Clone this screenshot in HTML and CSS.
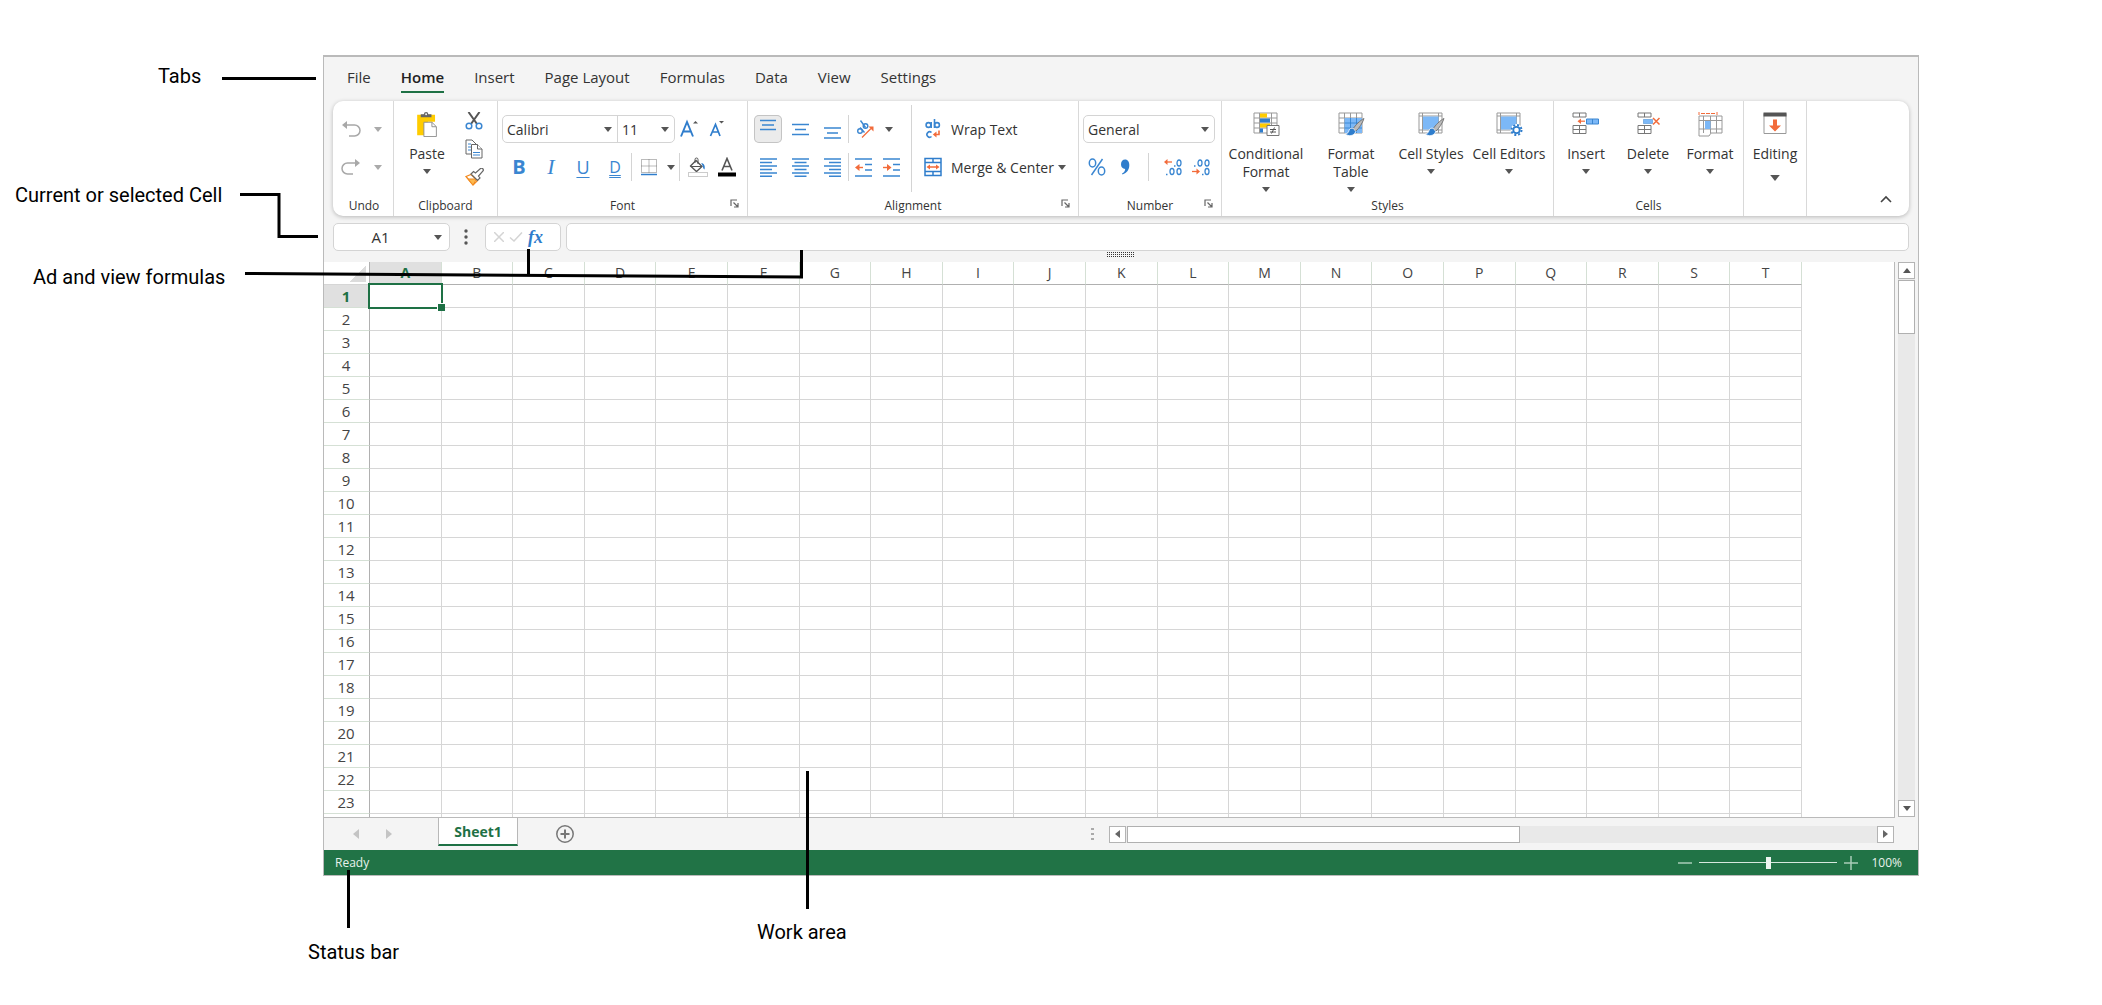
FILE: index.html
```
<!DOCTYPE html>
<html lang="en">
<head>
<meta charset="utf-8">
<title>Spreadsheet window overview</title>
<link rel="stylesheet" href="styles.css">
</head>
<body>
<svg class="defs" aria-hidden="true">
  <symbol id="caret" viewBox="0 0 8 5"><path d="M0 0h8L4 5z" fill="currentColor"/></symbol>
  <symbol id="launch" viewBox="0 0 9 9"><path d="M1 7V1h6M3.500 3.500l4 4M8 4v4H4" fill="none" stroke="#666" stroke-width="1.200"/></symbol>
  <symbol id="brush" viewBox="0 0 26 25"><path d="M25.500 6.500c-4 2-9 7-10.500 10l2.500 2.500c3-2.500 6.500-8 8-12.500z" fill="#bbb" stroke="#777" stroke-width="1"/><path d="M15 16.500c-2-1-4 0-4.500 2-.500 2-1.500 3-3.500 3.500 2.500 2.500 8.500 2.500 10.300-2.500z" fill="#2f7dcc" stroke="#fff" stroke-width=".8"/></symbol>
</svg>
<figure class="diagram">
  <aside class="side-labels">
    <p class="callout tabs-label">Tabs</p>
    <p class="callout cell-label">Current or selected Cell</p>
    <p class="callout formula-label">Ad and view formulas</p>
  </aside>

  <main class="app">
    <nav class="tabs">
      <a href="#">File</a><a href="#" class="active">Home</a><a href="#">Insert</a><a href="#">Page Layout</a><a href="#">Formulas</a><a href="#">Data</a><a href="#">View</a><a href="#">Settings</a>
    </nav>

    <div class="ribbon">
      <section class="group undo">
        <div class="rows">
          <div class="row">
            <button class="tool" aria-label="Undo"><svg width="20" height="18" viewBox="0 0 20 18" fill="none" stroke="#a8a8a8" stroke-width="1.500"><path d="M5 5h8.500a5 5 0 0 1 0 11H8"/><path d="M6 1v8L1 5z" fill="#a8a8a8" stroke="none"/></svg></button>
            <button class="drop muted" aria-label="Undo list"><svg class="caret"><use href="#caret"/></svg></button>
          </div>
          <div class="row">
            <button class="tool" aria-label="Redo"><svg width="20" height="18" viewBox="0 0 20 18" fill="none" stroke="#a8a8a8" stroke-width="1.500"><path d="M15 5H6.500a5 5 0 0 0 0 11H12"/><path d="M14 1v8l5-4z" fill="#a8a8a8" stroke="none"/></svg></button>
            <button class="drop muted" aria-label="Redo list"><svg class="caret"><use href="#caret"/></svg></button>
          </div>
        </div>
        <h2>Undo</h2>
      </section>

      <section class="group clipboard">
        <div class="pair">
          <button class="big"><svg width="24" height="28" viewBox="0 0 24 28"><path d="M1 3h20v8h-8v15H1z" fill="#fc0"/><path d="M5 6V2.500h3.500a2.500 2.500 0 0 1 5 0H17V6z" fill="#666"/><circle cx="11" cy="2.500" r="1" fill="#fff"/><path d="M8.500 11.500h9l5 5v11h-14z" fill="#fff" stroke="#888"/><path d="M17.500 11.500v5h5" fill="none" stroke="#888"/></svg><span>Paste</span><svg class="caret"><use href="#caret"/></svg></button>
          <div class="stack">
            <button class="tool" aria-label="Cut"><svg width="18" height="18" viewBox="0 0 18 18" fill="none"><path d="M3.500 0L12 12M14.500 0L6 12" stroke="#555" stroke-width="2"/><circle cx="4" cy="14" r="2.800" stroke="#3a86d1" stroke-width="1.500"/><circle cx="14" cy="14" r="2.800" stroke="#3a86d1" stroke-width="1.500"/></svg></button>
            <button class="tool" aria-label="Copy"><svg width="18" height="20" viewBox="0 0 18 20" fill="#fff" stroke="#666"><path d="M1 1h6l4 4v10H1z"/><path d="M3 5h3M3 8h3M3 11h3" stroke="#3a86d1"/><path d="M6.500 5.500h6l4.500 4.500v9H6.500z"/><path d="M12.500 5.500v4.500H17"/><path d="M8 13.500h7M8 16h7" stroke="#3a86d1"/></svg></button>
            <button class="tool" aria-label="Format painter"><svg width="20" height="18" viewBox="0 0 20 18"><path d="M2 8.500l5-2 6.500 6L9 17z" fill="#fff" stroke="#f38a1f" stroke-width="1.300"/><path d="M4 11h8.500L9 17z" fill="#fdb94d" stroke="#f38a1f"/><path d="M7 6l2.500-2.500 2 1.500 5-4.500a1.800 1.800 0 0 1 2.500 2.500l-4.500 5 1.500 2-2.500 2.500z" fill="#fff" stroke="#666" stroke-width="1.200"/></svg></button>
          </div>
        </div>
        <h2>Clipboard</h2>
      </section>

      <section class="group font">
        <div class="rows">
          <div class="row">
            <span class="combo"><select class="family" aria-label="Font"><option>Calibri</option></select><select class="size" aria-label="Font size"><option>11</option></select></span>
            <button class="tool w28" aria-label="Grow font"><svg width="18" height="20" viewBox="0 0 18 20"><path d="M1 17.500L7 3l6 14.500M3 12.500h8" fill="none" stroke="#2f7dcc" stroke-width="1.900"/><path d="M13 4.500h5L15.500 2z" fill="#555"/></svg></button>
            <button class="tool w28" aria-label="Shrink font"><svg width="16" height="20" viewBox="0 0 16 20"><path d="M1.500 17L6.500 5.500 11 17M3 13h6.500" fill="none" stroke="#2f7dcc" stroke-width="1.700"/><path d="M10 2h5l-2.500 2.500z" fill="#555"/></svg></button>
          </div>
          <div class="row letters">
            <button class="tool w32 letter b">B</button>
            <button class="tool w32 letter i">I</button>
            <button class="tool w32 letter u">U</button>
            <button class="tool w32 letter d">D</button>
            <i class="rule border-rule"></i>
            <button class="tool w28" aria-label="Borders"><svg width="16" height="17" viewBox="0 0 16 17" fill="none"><path d="M.5 .5h15v13H.5zM8 .5v13M.5 7h15" stroke="#777" stroke-dasharray="1 1"/><path d="M0 15.500h16" stroke="#2f7dcc" stroke-width="1.500"/></svg></button>
            <button class="drop w16" aria-label="Border list"><svg class="caret"><use href="#caret"/></svg></button>
            <i class="rule"></i>
            <button class="tool w36" aria-label="Fill colour"><svg width="20" height="20" viewBox="0 0 20 20" fill="none"><path d="M2.500 9L8 3.500l6 6-5.500 5z" stroke="#555" stroke-width="1.300"/><path d="M7 6V2.500a1.500 1.500 0 0 1 3 0V7M2.500 9.500h11" stroke="#555"/><path d="M13 6c3 0 4.500 3 3.500 6.500-2-1-1-3.500-3.500-6.500z" fill="#2f7dcc"/><rect x=".5" y="15.500" width="19" height="4" fill="#fff" stroke="#ccc"/></svg></button>
            <button class="tool w22" aria-label="Font colour"><svg width="18" height="20" viewBox="0 0 18 20"><path d="M4 13.500L9 1.500l5 12M5.500 9.500h7" fill="none" stroke="#555" stroke-width="1.600"/><path d="M0 15.500h18v4H0z"/></svg></button>
          </div>
        </div>
        <h2>Font<button class="launcher" aria-label="Font settings"><svg width="9" height="9"><use href="#launch"/></svg></button></h2>
      </section>

      <section class="group alignment">
        <div class="rows">
          <div class="row">
            <button class="tool w32" aria-label="Top align"><svg class="pressed" width="28" height="28" viewBox="0 0 28 28" stroke="#3a86d1" stroke-width="1.400"><path d="M6 5.500h16M8 10h12M6 14.500h16"/></svg></button>
            <button class="tool w32" aria-label="Middle align"><svg width="17" height="18" viewBox="0 0 17 18" stroke="#3a86d1" stroke-width="1.400"><path d="M0 4.500h17M3 9.500h11M0 14.500h17"/></svg></button>
            <button class="tool w32" aria-label="Bottom align"><svg width="17" height="20" viewBox="0 0 17 20" stroke="#3a86d1" stroke-width="1.400"><path d="M0 9h17M3 14h11M0 19h17"/></svg></button>
            <i class="rule"></i>
            <button class="tool w32" aria-label="Orientation"><svg width="18" height="18" viewBox="0 0 18 18"><g fill="none" stroke="#3a86d1" stroke-width="1.400"><circle cx="4" cy="11" r="2.300"/><path d="M4 7.500l4.500 5"/><circle cx="9.500" cy="6" r="2.300"/><path d="M4.500 .5l5 7"/></g><path d="M6 17.500L15 8.500" stroke="#f26b3a" stroke-width="1.300"/><path d="M12.500 6.500h5v5z" fill="#f26b3a"/></svg></button>
            <button class="drop w16" aria-label="Orientation list"><svg class="caret"><use href="#caret"/></svg></button>
          </div>
          <div class="row">
            <button class="tool w32" aria-label="Align left"><svg width="17" height="19" viewBox="0 0 17 19" stroke="#3a86d1" stroke-width="1.400"><path d="M0 1h17M0 4.500h12M0 8h17M0 11.500h12M0 15h17M0 18.200h12"/></svg></button>
            <button class="tool w32" aria-label="Align centre"><svg width="17" height="19" viewBox="0 0 17 19" stroke="#3a86d1" stroke-width="1.400"><path d="M0 1h17M2.500 4.500h12M0 8h17M2.500 11.500h12M0 15h17M2.500 18.200h12"/></svg></button>
            <button class="tool w32" aria-label="Align right"><svg width="17" height="19" viewBox="0 0 17 19" stroke="#3a86d1" stroke-width="1.400"><path d="M0 1h17M5 4.500h12M0 8h17M5 11.500h12M0 15h17M5 18.200h12"/></svg></button>
            <i class="rule"></i>
            <button class="tool w28" aria-label="Decrease indent"><svg width="17" height="19" viewBox="0 0 17 19" fill="none" stroke="#3a86d1" stroke-width="1.400"><path d="M0 1h17M10 6.500h7M10 12h7M0 18h17"/><path d="M2 9.500h6" stroke="#f26b3a"/><path d="M0 9.500L4.500 6v7z" fill="#f26b3a" stroke="none"/></svg></button>
            <button class="tool w28" aria-label="Increase indent"><svg width="17" height="19" viewBox="0 0 17 19" fill="none" stroke="#3a86d1" stroke-width="1.400"><path d="M0 1h17M10 6.500h7M10 12h7M0 18h17"/><path d="M0 9.500h6" stroke="#f26b3a"/><path d="M8.500 9.500L4 6v7z" fill="#f26b3a" stroke="none"/></svg></button>
          </div>
        </div>
        <div class="rows wrap-col">
          <div class="row">
            <button class="text-tool"><svg width="18" height="20" viewBox="0 0 18 20" fill="none" stroke="#3a86d1" stroke-width="1.600"><circle cx="4.500" cy="6" r="2.400"/><path d="M7.200 3v6M10.500 0v9"/><circle cx="13" cy="6" r="2.400"/><path d="M7.500 13.500a2.700 2.700 0 1 0 0 4"/><path d="M15 11.500v4H11" stroke="#f26b3a"/><path d="M8.800 15.500l3.700-3v6z" fill="#f26b3a" stroke="none"/></svg>Wrap Text</button>
          </div>
          <div class="row">
            <button class="text-tool"><svg width="18" height="20" viewBox="0 0 18 20" fill="none" stroke="#2f7dcc" stroke-width="1.500"><path d="M1 1.500h16v17H1zM1 5.500h16M1 14.500h16M9 1.500v4M9 14.500v4"/><path d="M4 10h10" stroke="#f26b3a"/><path d="M2.500 10l3.500-2.500v5zM15.500 10L12 7.500v5z" fill="#f26b3a" stroke="none"/></svg>Merge &amp; Center</button>
            <button class="drop w16" aria-label="Merge list"><svg class="caret"><use href="#caret"/></svg></button>
          </div>
        </div>
        <h2>Alignment<button class="launcher" aria-label="Alignment settings"><svg width="9" height="9"><use href="#launch"/></svg></button></h2>
      </section>

      <section class="group number">
        <div class="rows">
          <div class="row"><span class="combo"><select class="format" aria-label="Number format"><option>General</option></select></span></div>
          <div class="row">
            <button class="tool w28" aria-label="Percent"><svg width="18" height="18" viewBox="0 0 18 18" fill="none" stroke="#3a86d1" stroke-width="1.500"><ellipse cx="4.500" cy="5" rx="3.200" ry="4"/><ellipse cx="13.500" cy="13" rx="3.200" ry="4"/><path d="M14.500 1l-11 16"/></svg></button>
            <button class="tool w28" aria-label="Comma"><svg width="10" height="18" viewBox="0 0 10 18"><path d="M5 1.500c3 0 4.300 2.500 4.300 5.500 0 4.500-2.300 8-6.800 9.500l-.5-1c2-1 3-2.500 3.200-4.500C2.500 11 1 9 1 6.300 1 3.500 2.800 1.500 5 1.500z" fill="#2f7dcc"/></svg></button>
            <i class="rule gap"></i>
            <button class="tool w28" aria-label="Increase decimal"><svg width="18" height="18" viewBox="0 0 18 18" fill="none" stroke="#3a86d1" stroke-width="1.300"><ellipse cx="15" cy="5" rx="2" ry="3"/><ellipse cx="8" cy="13.500" rx="2" ry="3"/><ellipse cx="15" cy="13.500" rx="2" ry="3"/><path d="M10 8h1.500M2 16.500h1.500"/><path d="M2 4h6" stroke="#f26b3a"/><path d="M0 4l3.500-3v6z" fill="#f26b3a" stroke="none"/></svg></button>
            <button class="tool w28" aria-label="Decrease decimal"><svg width="18" height="18" viewBox="0 0 18 18" fill="none" stroke="#3a86d1" stroke-width="1.300"><ellipse cx="8" cy="5" rx="2" ry="3"/><ellipse cx="15" cy="5" rx="2" ry="3"/><ellipse cx="15" cy="13.500" rx="2" ry="3"/><path d="M2 8h1.500M10 16.500h1.500"/><path d="M0 13.500h6" stroke="#f26b3a"/><path d="M8 13.500l-3.500-3v6z" fill="#f26b3a" stroke="none"/></svg></button>
          </div>
        </div>
        <h2>Number<button class="launcher" aria-label="Number settings"><svg width="9" height="9"><use href="#launch"/></svg></button></h2>
      </section>

      <section class="group styles">
        <div class="bigs">
          <button class="big"><svg width="27" height="25" viewBox="0 0 27 25"><path d="M1 1h23v20H1zM6.500 1v20M18.500 1v20M1 6h23M1 11h23M1 16h23" fill="#fff" stroke="#999"/><path d="M7 1.500h7v4H7zM7 11.500h10v4H7z" fill="#fc0"/><path d="M7 6.500h10v4H7zM7 16.500h3v4H7z" fill="#2f7dcc"/><path d="M14 13.500h12v10H14z" fill="#fff" stroke="#777"/><path d="M17 17.500h6M17 20h6M21.500 15.500l-3 6" stroke="#555"/></svg><span>Conditional Format</span><svg class="caret"><use href="#caret"/></svg></button>
          <button class="big"><svg width="27" height="25" viewBox="0 0 27 25"><path d="M1 1h23v20H1zM6.500 1v20M12.500 1v20M18.500 1v20M1 6h23M1 11h23M1 16h23" fill="#fff" stroke="#999"/><path d="M6.500 6H24v15H6.500z" fill="#7cb8f7"/><path d="M12.500 6v15M18.500 6v15M6.500 11H24M6.500 16H24" stroke="#2f7dcc" stroke-width=".8"/><use href="#brush"/></svg><span>Format Table</span><svg class="caret"><use href="#caret"/></svg></button>
          <button class="big"><svg width="27" height="25" viewBox="0 0 27 25"><path d="M1 1h23v20H1zM4.500 1v20M20.500 1v20M1 4h23M1 18h23" fill="#fff" stroke="#999"/><path d="M5 4.500h15.500V17.500H5z" fill="#7cb8f7"/><use href="#brush"/></svg><span>Cell Styles</span><svg class="caret"><use href="#caret"/></svg></button>
          <button class="big"><svg width="27" height="25" viewBox="0 0 27 25"><path d="M1 1h23v20H1zM4.500 1v20M20.500 1v20M1 4h23M1 18h23" fill="#fff" stroke="#999"/><path d="M5 4.500h15.500V17.500H5z" fill="#7cb8f7"/><circle cx="20.500" cy="18" r="6" fill="#fff"/><circle cx="20.500" cy="18" r="5" fill="none" stroke="#2f7dcc" stroke-width="2" stroke-dasharray="2 1.930"/><circle cx="20.500" cy="18" r="3.200" fill="#fff" stroke="#2f7dcc" stroke-width="1.800"/></svg><span>Cell Editors</span><svg class="caret"><use href="#caret"/></svg></button>
        </div>
        <h2>Styles</h2>
      </section>

      <section class="group cells">
        <div class="bigs">
          <button class="big"><svg width="28" height="25" viewBox="0 0 28 25" fill="#fff" stroke="#777"><path d="M1 1h13v4H1zM7.500 1v4M1 13.500h13v8H1zM7.500 13.500v8M1 17.500h13"/><path d="M14.500 7h12v5h-12zM20.500 7v5" fill="#7cb8f7" stroke="#3a86d1"/><path d="M8 9.200h5" stroke="#f26b3a" stroke-width="1.200"/><path d="M5.500 9.200L9 6.500v5.400z" fill="#f26b3a" stroke="none"/></svg><span>Insert</span><svg class="caret"><use href="#caret"/></svg></button>
          <button class="big"><svg width="25" height="25" viewBox="0 0 25 25" fill="#fff" stroke="#777"><path d="M2 1h13v4H2zM8.500 1v4M2 13.500h13v8H2zM8.500 13.500v8M2 17.500h13"/><path d="M7.500 7.500h9v4h-9z" fill="#7cb8f7" stroke="#3a86d1" stroke-dasharray="1 1"/><path d="M17 6l6.500 6.500M23.500 6L17 12.500" stroke="#f26b3a" stroke-width="1.500"/></svg><span>Delete</span><svg class="caret"><use href="#caret"/></svg></button>
          <button class="big"><svg width="25" height="25" viewBox="0 0 25 25" fill="#fff" stroke="#999"><path d="M1 4h23v17H13l-2 3H1zM5.500 4v17M12.500 4v17M18.500 4v17M1 8.500h23M1 17h23"/><path d="M7 9h5.500v8H7z" fill="#7cb8f7" stroke="none"/><path d="M1 0v3M19 0v3M3 1.500h14" stroke="#f26b3a" stroke-dasharray="4 1"/></svg><span>Format</span><svg class="caret"><use href="#caret"/></svg></button>
        </div>
        <h2>Cells</h2>
      </section>

      <section class="group editing">
        <div class="bigs">
          <button class="big"><svg width="24" height="25" viewBox="0 0 24 25"><path d="M1 1.500h22v20H1z" fill="#fff" stroke="#999"/><path d="M.5 .5h23v4H.5z" fill="#555"/><path d="M10 7.500h4v6h4l-6 6-6-6h4z" fill="#f26b3a"/></svg><span>Editing</span><svg class="caret large"><use href="#caret"/></svg></button>
        </div>
      </section>
      <button class="collapse" aria-label="Collapse ribbon"><svg width="12" height="8" viewBox="0 0 12 8" fill="none" stroke="#444" stroke-width="1.600"><path d="M1 7l5-5 5 5"/></svg></button>
    </div>

    <div class="formula-bar">
      <select class="name-box" aria-label="Name box"><option>A1</option></select>
      <svg class="dots" width="4" height="16" viewBox="0 0 4 16" fill="#555"><circle cx="2" cy="2" r="1.700"/><circle cx="2" cy="8" r="1.700"/><circle cx="2" cy="14" r="1.700"/></svg>
      <div class="fx-box">
        <button class="tool" aria-label="Cancel"><svg width="10" height="10" viewBox="0 0 10 10" stroke="#d4d4d4" stroke-width="1.500"><path d="M0 0l10 10M10 0L0 10"/></svg></button>
        <button class="tool" aria-label="Enter"><svg width="14" height="10" viewBox="0 0 14 10" fill="none" stroke="#d4d4d4" stroke-width="1.500"><path d="M1 5.500L5 9l8-8.500"/></svg></button>
        <button class="tool fx">fx</button>
      </div>
      <input class="formula" type="text" aria-label="Formula">
      <svg class="grip" width="28" height="5" viewBox="0 0 28 5" stroke="#333" stroke-dasharray="1 1"><path d="M0 .5h28M0 2.500h28M0 4.500h28"/></svg>
    </div>

    <div class="work">
      <div class="pane"><table class="grid" id="grid"></table></div>
      <div class="vscroll">
        <button aria-label="Scroll up"><svg class="caret flip"><use href="#caret"/></svg></button>
        <i class="thumb"></i>
        <button class="end" aria-label="Scroll down"><svg class="caret"><use href="#caret"/></svg></button>
      </div>
    </div>

    <div class="sheets">
      <button class="nav" aria-label="Previous sheet"><svg width="6" height="10" viewBox="0 0 6 10" fill="#c4c4c4"><path d="M6 0v10L0 5z"/></svg></button>
      <button class="nav" aria-label="Next sheet"><svg width="6" height="10" viewBox="0 0 6 10" fill="#c4c4c4"><path d="M0 0v10l6-5z"/></svg></button>
      <button class="sheet">Sheet1</button>
      <button class="add" aria-label="Add sheet"><svg width="18" height="18" viewBox="0 0 18 18" fill="none" stroke="#777"><circle cx="9" cy="9" r="8.200" stroke-width="1.500"/><path d="M9 4.500v9M4.500 9h9" stroke-width="2"/></svg></button>
      <svg class="split" width="3" height="12" viewBox="0 0 3 12" fill="#aaa"><path d="M0 0h3v2H0zM0 5h3v2H0zM0 10h3v2H0z"/></svg>
      <div class="hscroll">
        <button aria-label="Scroll left"><svg width="5" height="8" viewBox="0 0 5 8" fill="#666"><path d="M5 0v8L0 4z"/></svg></button>
        <i class="thumb"></i>
        <button class="end" aria-label="Scroll right"><svg width="5" height="8" viewBox="0 0 5 8" fill="#666"><path d="M0 0v8l5-4z"/></svg></button>
      </div>
    </div>

    <footer class="status">
      <span>Ready</span>
      <button class="zoom-out" aria-label="Zoom out"><svg width="14" height="14" viewBox="0 0 14 14" stroke="#a9cdb8" stroke-width="1.500"><path d="M0 7h14"/></svg></button>
      <input type="range" aria-label="Zoom" min="0" max="200" value="100">
      <button class="zoom-in" aria-label="Zoom in"><svg width="14" height="14" viewBox="0 0 14 14" stroke="#a9cdb8" stroke-width="1.500"><path d="M0 7h14M7 0v14"/></svg></button>
      <span class="percent">100%</span>
    </footer>
  </main>

  <div class="bottom-labels">
    <p class="callout status-label">Status bar</p>
    <p class="callout work-label">Work area</p>
  </div>

  <svg class="lines" width="820" height="940" viewBox="0 0 820 940" fill="none" stroke="#000" stroke-width="3" aria-hidden="true">
    <path d="M222 78.500h94"/>
    <path d="M240 194.500h39v42h39"/>
    <path d="M245 273.500L803 277M528.500 249v27M801.500 250v28"/>
    <path d="M807.500 771v138M348.500 870v58"/>
  </svg>
</figure>
<script src="script.js"></script>
</body>
</html>
```
FILE: styles.css
```
* { box-sizing: border-box; }
body { margin: 0; background: #fff; color: #333; font-family: "Open Sans", "Noto Sans", sans-serif; font-size: 14px; }
button, select, input { font: inherit; color: inherit; margin: 0; padding: 0; border: 0; background: none; }
button { display: flex; align-items: center; justify-content: center; }
svg { display: block; flex: none; }
.defs { position: absolute; width: 0; height: 0; }

.diagram { position: relative; margin: 0; display: grid; grid-template-columns: 323px minmax(0, 1fr) 183px; padding-top: 55px; }
.callout { margin: 0; font: 20px/24px Roboto, "Liberation Sans", sans-serif; color: #000; white-space: nowrap; }
.side-labels { padding-top: 9px; }
.tabs-label { margin-left: 158px; }
.cell-label { margin: 95px 0 0 15px; }
.formula-label { margin: 58px 0 0 33px; }
.bottom-labels { grid-column: 1 / -1; display: flex; align-items: flex-start; padding: 44px 0 0 308px; }
.status-label { width: 449px; padding-top: 20px; }
.lines { position: absolute; left: 0; top: 0; pointer-events: none; }

.app { border: 1px solid #bababa; border-top-width: 2px; background: #f4f4f4; }
.tabs { display: flex; gap: 30px; padding: 6px 0 0 23px; height: 44px; font-size: 15px; line-height: 28px; }
.tabs a { color: #333; text-decoration: none; height: 30px; }
.tabs .active { font-weight: 600; color: #222; border-bottom: 2px solid #1e7145; }

.ribbon { display: flex; height: 115px; margin: 0 9px; background: #fff; border-radius: 10px; box-shadow: 0 1px 4px rgba(0,0,0,.25); }
.group { position: relative; display: grid; grid-template: 1fr 20px / auto 1fr; border-right: 1px solid #d9d9d9; flex: none; }
.group h2 { grid-column: 1 / -1; position: relative; margin: 0; text-align: center; font-size: 12px; font-weight: 400; line-height: 20px; }
.launcher { position: absolute; right: 8px; top: 3px; }
.undo { width: 61px; }
.clipboard { width: 104px; }
.font { width: 250px; }
.alignment { width: 331px; }
.number { width: 143px; }
.styles { width: 332px; }
.cells { width: 190px; }
.editing { width: 63px; }
.rows { padding-top: 9px; }
.row { display: flex; align-items: center; height: 38px; padding-left: 4px; }
.row.letters { padding-left: 5px; }
.undo .row { padding-left: 8px; }
.caret { width: 8px; height: 5px; color: #555; }
.caret.large { width: 10px; height: 6px; }
.caret.flip { transform: rotate(180deg); }
.muted .caret { color: #aaa; }
.undo .drop { width: 34px; }
.w16 { width: 16px; }
.w22 { width: 22px; }
.w28 { width: 28px; }
.w32 { width: 32px; }
.w36 { width: 36px; }
.rule { width: 1px; height: 28px; background: #d4d4d4; }
.rule.gap { margin: 0 10px 0 9px; }
.border-rule { margin-right: 3px; }
.number .row { padding-left: 0; }
.number .rows { padding-left: 4px; }

.pair { display: flex; }
.pair .big { width: 66px; }
.stack { display: flex; flex-direction: column; gap: 9px; padding: 11px 0 0; width: 28px; align-items: center; }
.big { flex-direction: column; justify-content: flex-start; padding-top: 11px; align-items: center; line-height: 18px; }
.big > svg:first-child { height: 25px; margin-bottom: 8px; }
.big .caret { margin-top: 6px; }
.big .caret.large { margin-top: 12px; }
.bigs { display: flex; grid-column: 1 / -1; align-items: flex-start; }
.styles .big { width: 78px; }
.styles .big:nth-child(1) { width: 88px; }
.styles .big:nth-child(2) { width: 82px; padding-left: 12px; padding-right: 12px; }
.cells .bigs { padding-left: 1px; }
.cells .big, .editing .big { width: 62px; }

.combo { display: flex; height: 28px; border: 1px solid #d4d4d4; border-radius: 5px; }
.combo select { padding-left: 4px; }
select { appearance: none; background: url("data:image/svg+xml,%3Csvg xmlns='http://www.w3.org/2000/svg' width='8' height='5'%3E%3Cpath d='M0 0h8L4 5z' fill='%23555'/%3E%3C/svg%3E") no-repeat right 5px center; }
.family { width: 114px; }
.size { width: 57px; border-left: 1px solid #d4d4d4; }
.number .format { width: 130px; }
.letter { height: 28px; color: #3a86d1; font-size: 18px; line-height: 22px; }
.letter.b { font-weight: 700; font-size: 20px; }
.letter.i { font-family: "Liberation Serif", serif; font-style: italic; font-size: 22px; }
.letter.u { text-decoration: underline; text-underline-offset: 3px; text-decoration-thickness: 1px; }
.letter.d { font-size: 16px; text-decoration: underline double; text-underline-offset: 2px; text-decoration-thickness: 1px; }
.pressed { background: #ebebeb; border-radius: 5px; box-shadow: inset 0 0 0 1px #c4c4c4; }
.wrap-col { border-left: 1px solid #d4d4d4; margin: 4px 0; padding-top: 5px; justify-self: end; width: 167px; }
.wrap-col .row { padding-left: 12px; }
.text-tool { gap: 9px; }
.collapse { margin: auto 17px 13px auto; }

.formula-bar { position: relative; display: flex; align-items: center; height: 46px; padding: 0 9px 4px; }
.name-box { width: 117px; height: 28px; border: 1px solid #d4d4d4; border-radius: 5px; background-color: #fff; background-position: right 7px center; text-align: center; text-align-last: center; padding-right: 22px; font-size: 15px; }
.dots { margin: 0 17px 0 14px; }
.fx-box { display: flex; gap: 5px; width: 76px; height: 28px; padding-left: 8px; border: 1px solid #d4d4d4; border-radius: 5px; background: #fff; }
.fx { color: #2f7dcc; font: italic 700 18px/24px "Liberation Serif", serif; }
.formula { flex: 1; min-width: 0; height: 28px; margin-left: 5px; border: 1px solid #d4d4d4; border-radius: 5px; background: #fff; }
.grip { position: absolute; left: 783px; bottom: 5px; }

.work { display: flex; height: 556px; }
.pane { flex: 1; min-width: 0; overflow: hidden; background: #fff; border: solid #bababa; border-width: 0 1px 1px 0; }
.grid { width: calc(100% - 92px); table-layout: fixed; border-collapse: separate; border-spacing: 0; font-size: 15px; color: #444; }
.grid th, .grid td { height: 23px; padding: 0; font-weight: 400; line-height: 22px; border: solid #d6d6d6; border-width: 0 1px 1px 0; }
.grid thead th { border-color: #d5e0d5; border-bottom-color: #b0b0b0; font-size: 14px; }
.grid tr > :first-child { width: 46px; border-right-color: #b0b0b0; padding-right: 1px; }
.grid tbody th { border-bottom-color: #d5e0d5; }
.grid thead .on, .grid tbody .on { background: #e0e0e0; color: #1e7145; font-weight: 700; }
.grid .corner { background: linear-gradient(135deg, transparent 50%, #dcdcdc 50%) no-repeat 26px 3px / 16px 17px; border-right-color: #e4e4e4; }
.grid .picked { position: relative; }
.picked::before { content: ""; position: absolute; inset: -2px; border: 2px solid #1e7145; }
.picked::after { content: ""; position: absolute; right: -4px; bottom: -4px; width: 7px; height: 7px; background: #1e7145; border: solid #fff; border-width: 1px 0 0 1px; }

.vscroll { display: flex; flex-direction: column; width: 17px; margin: 0 3px 1px 3px; background: #e9e9e9; }
.vscroll button, .hscroll button { flex: none; width: 17px; height: 17px; background: #fff; border: 1px solid #b4b4b4; }
.thumb { background: #fff; border: 1px solid #b0b0b0; }
.vscroll .thumb { height: 54px; margin-top: 1px; }
.end { margin-top: auto; }

.sheets { display: flex; align-items: center; height: 32px; }
.nav { width: 33px; height: 32px; }
.nav:first-child { margin-left: 15px; }
.sheet { align-self: flex-start; width: 80px; height: 28px; margin-left: 33px; background: #fff; border: solid #b8b8b8; border-width: 0 1px; border-bottom: 2px solid #1e7145; color: #1e7145; font-weight: 700; font-size: 14px; }
.add { margin-left: 38px; }
.split { margin-left: auto; }
.hscroll { display: flex; width: calc(50% - 12px); margin: 0 24px 0 15px; background: #e9e9e9; }
.hscroll .thumb { width: 50%; margin-left: 1px; }
.hscroll .end { margin: 0 0 0 auto; }

.status { display: flex; align-items: center; height: 25px; padding: 0 16px 0 11px; background: #217346; color: #e8f2ec; font-size: 12px; }
.zoom-out { margin-left: auto; }
.status input { appearance: none; width: 138px; height: 13px; margin: 0 7px; background: linear-gradient(#d7e8de, #d7e8de) no-repeat center / 100% 1px; }
.status input::-webkit-slider-thumb { appearance: none; width: 5px; height: 12px; background: #eef5f1; }
.percent { margin-left: 13px; }
```
FILE: script.js
```
// Builds the worksheet: columns A to T, rows 1 to 23, then the edge of one more row.
const columns = 'ABCDEFGHIJKLMNOPQRST'.split('');
const head = columns.map((c, i) => `<th scope="col"${i === 0 ? ' class="on"' : ''}>${c}</th>`).join('');
let body = '';
for (let r = 1; r <= 24; r++) {
  const cells = columns.map((c, i) => `<td${r === 1 && i === 0 ? ' class="picked"' : ''}></td>`).join('');
  body += `<tr><th scope="row"${r === 1 ? ' class="on"' : ''}>${r < 24 ? r : ''}</th>${cells}</tr>`;
}
document.getElementById('grid').innerHTML =
  `<thead><tr><td class="corner"></td>${head}</tr></thead><tbody>${body}</tbody>`;
```
